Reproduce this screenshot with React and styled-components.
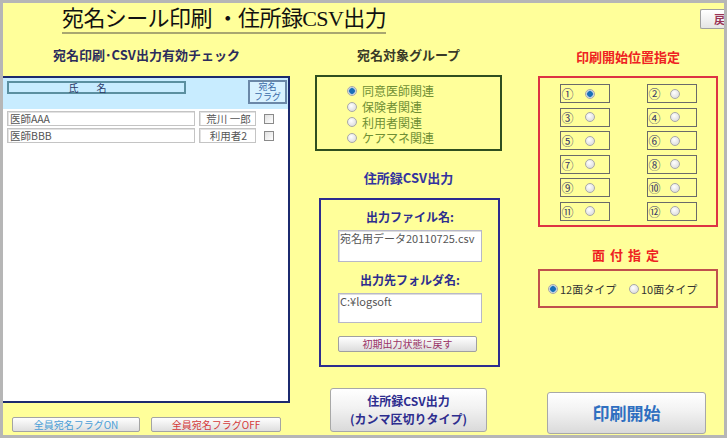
import React from 'react'
import styled, { createGlobalStyle } from 'styled-components'

const GlobalStyle = createGlobalStyle`
  body {
    margin: 0;
    background: #ffffff;
  }
`

const JP = `'Noto Sans CJK JP', 'Liberation Sans', sans-serif`

const Frame = styled.div`
  width: 727px;
  height: 438px;
  box-sizing: border-box;
  border: 3px solid #b6b6b6;
  background: #ffff9a;
  overflow: hidden;
  display: flex;
  flex-direction: column;
  font-family: ${JP};
`

const Header = styled.div`
  display: flex;
  align-items: flex-start;
  height: 40px;
  flex-shrink: 0;
`

const Title = styled.div`
  margin: 4px 0 0 59px;
  font-family: 'Liberation Serif', 'Noto Sans CJK JP', serif;
  font-size: 22px;
  line-height: 24px;
  letter-spacing: -0.6px;
  color: #111;
  border-bottom: 2px solid #a9a770;
  padding-bottom: 1px;
`

const BackButton = styled.div`
  margin: 6px 0 0 auto;
  width: 24px;
  height: 20px;
  box-sizing: border-box;
  border: 1px solid #a0a0a0;
  border-right: none;
  border-radius: 2px 0 0 2px;
  background: linear-gradient(#ffffff, #e4e4e4);
  color: #993355;
  font-size: 11px;
  font-weight: bold;
  line-height: 18px;
  padding-left: 13px;
`

const Columns = styled.div`
  display: flex;
  flex: 1;
`

const Column = styled.div`
  display: flex;
  flex-direction: column;
  width: ${p => p.$width}px;
  margin-left: ${p => p.$left || 0}px;
  padding-top: ${p => p.$top || 0}px;
`

const SectionTitle = styled.div`
  font-size: 13px;
  font-weight: bold;
  line-height: 24px;
  height: 24px;
  text-align: center;
  color: ${p => p.$color};
  letter-spacing: ${p => p.$spacing || 0}px;
  margin-top: ${p => p.$mt || 0}px;
`

/* left list */
const ListPanel = styled.div`
  margin-top: 9px;
  height: 327px;
  box-sizing: border-box;
  border: 2px solid #1c2a6e;
  border-left: none;
  background: #ffffff;
`

const ListHead = styled.div`
  height: 31px;
  background: #c8ecff;
  display: flex;
  align-items: flex-start;
  padding-left: 4px;
`

const NameBar = styled.div`
  margin-top: 3px;
  width: 179px;
  height: 13px;
  box-sizing: border-box;
  border: 2px solid #5b8fa0;
  font-size: 10px;
  line-height: 9px;
  text-align: center;
  color: #2a3a6a;
  letter-spacing: 18px;
`

const FlagBox = styled.div`
  margin: 2px 1px 0 auto;
  width: 39px;
  height: 24px;
  box-sizing: border-box;
  border: 2px solid #6a88a8;
  background: #d8f2ff;
  color: #3a6aa8;
  text-align: center;
  font-size: 9px;
  line-height: 10px;
  padding: 0 4px;
  word-break: keep-all;
`

const Rows = styled.div`
  display: flex;
  flex-direction: column;
  gap: 2px;
  padding: 2px 0 0 4px;
`

const Row = styled.div`
  display: flex;
  align-items: center;
  height: 15px;
`

const Field = styled.div`
  width: ${p => p.$width}px;
  height: 15px;
  margin-left: ${p => p.$left || 0}px;
  box-sizing: border-box;
  border: 1px solid #c4c4c4;
  box-shadow: inset 1px 1px 0 #e2e2e2;
  font-size: 10.5px;
  line-height: 13px;
  color: #555;
  padding-left: 2px;
  text-align: ${p => (p.$center ? 'center' : 'left')};
  white-space: nowrap;
`

const Check = styled.div`
  margin-left: 8px;
  width: 10px;
  height: 10px;
  box-sizing: border-box;
  border: 1px solid #8a8a8a;
  background: linear-gradient(135deg, #e0e0e0, #ffffff);
`

const SmallButtons = styled.div`
  display: flex;
  gap: 11px;
  margin: 14px 0 0 9px;
`

const SmallButton = styled.div`
  width: ${p => p.$width}px;
  height: 15px;
  box-sizing: border-box;
  border: 1px solid #a4a4a4;
  border-radius: 2px;
  background: linear-gradient(#ffffff, #dedede);
  color: ${p => p.$color};
  font-size: 10px;
  line-height: 13px;
  text-align: center;
`

/* middle */
const GroupBox = styled.div`
  margin-top: 8px;
  height: 76px;
  box-sizing: border-box;
  border: 2px solid #2f4f1f;
  padding: 6px 0 0 30px;
`

const RadioLine = styled.div`
  display: flex;
  align-items: center;
  height: 15.7px;
  gap: 5px;
  font-size: 12px;
  color: ${p => p.$color || '#333'};
`

const Radio = styled.span`
  flex-shrink: 0;
  width: 10px;
  height: 10px;
  box-sizing: border-box;
  border-radius: 50%;
  border: 1px solid #a8a8a8;
  background: ${p =>
    p.$checked
      ? 'radial-gradient(circle, #1a6fb8 0 2.5px, #8fb8d8 3px, #e8e8e8 4px)'
      : 'radial-gradient(circle at 40% 35%, #ffffff, #d4d4d4)'};
  margin-left: ${p => p.$left || 0}px;
`

const CsvBox = styled.div`
  margin: 8px 2px 0 4px;
  height: 169px;
  box-sizing: border-box;
  border: 2px solid #2d2d8f;
  padding: 9px 0 0 17px;
  display: flex;
  flex-direction: column;
`

const FieldLabel = styled.div`
  width: 144px;
  text-align: center;
  font-size: 12px;
  font-weight: bold;
  line-height: 16px;
  color: #2d2d8f;
  margin-top: ${p => p.$mt || 0}px;
`

const TextArea = styled.div`
  margin-top: 5px;
  width: 144px;
  height: ${p => p.$height}px;
  box-sizing: border-box;
  border: 1px solid #b8b8c8;
  box-shadow: inset 1px 1px 0 #dcdcdc;
  background: #ffffff;
  font-size: 11px;
  line-height: 14px;
  color: #555;
  padding-left: 1px;
  white-space: nowrap;
  overflow: hidden;
`

const ResetButton = styled.div`
  margin-top: 13px;
  width: 139px;
  height: 16px;
  box-sizing: border-box;
  border: 1px solid #a0a0a0;
  border-radius: 2px;
  background: linear-gradient(#ffffff, #dcdcdc);
  color: #993366;
  font-size: 10px;
  line-height: 14px;
  text-align: center;
`

const BigButton = styled.div`
  margin: ${p => p.$mt}px 0 0 ${p => p.$left}px;
  width: ${p => p.$width}px;
  height: ${p => p.$height}px;
  box-sizing: border-box;
  border: 1px solid #a8a8a8;
  border-radius: 3px;
  background: linear-gradient(#ffffff 0%, #f2f2f2 45%, #dadada 100%);
  display: flex;
  flex-direction: column;
  align-items: center;
  justify-content: center;
  color: ${p => p.$color};
  font-weight: bold;
  font-size: ${p => p.$size}px;
  line-height: ${p => p.$line}px;
`

/* right */
const PosBox = styled.div`
  margin-top: 7px;
  height: 151px;
  box-sizing: border-box;
  border: 2px solid #dd3344;
  display: grid;
  grid-template-columns: 50px 50px;
  grid-auto-rows: 19px;
  column-gap: 37px;
  row-gap: 4.6px;
  justify-content: center;
  padding-top: 6px;
`

const PosCell = styled.div`
  box-sizing: border-box;
  border: 1px solid #6a6a6a;
  display: flex;
  align-items: center;
  font-size: 12px;
  color: #3a3a6a;
  padding-left: 1px;
`

const TypeBox = styled.div`
  margin-top: 2px;
  height: 39px;
  box-sizing: border-box;
  border: 2px solid #c0504d;
  display: flex;
  align-items: center;
  padding-left: 8px;
`

const TypeOption = styled.div`
  display: flex;
  align-items: center;
  gap: 2px;
  font-size: 11px;
  color: #333;
  width: ${p => p.$width}px;
`

const groups = ['同意医師関連', '保険者関連', '利用者関連', 'ケアマネ関連']
const positions = ['①', '②', '③', '④', '⑤', '⑥', '⑦', '⑧', '⑨', '⑩', '⑪', '⑫']
const people = [
  { title: '医師AAA', name: '荒川 一郎' },
  { title: '医師BBB', name: '利用者2' },
]

export default function App() {
  return (
    <>
      <GlobalStyle />
      <Frame>
        <Header>
          <Title>宛名シール印刷 ・住所録CSV出力</Title>
          <BackButton>戻</BackButton>
        </Header>
        <Columns>
          <Column $width={287}>
            <SectionTitle $color="#2c2c5c">宛名印刷･CSV出力有効チェック</SectionTitle>
            <ListPanel>
              <ListHead>
                <NameBar>氏名</NameBar>
                <FlagBox>{'宛名\u200bフラグ'}</FlagBox>
              </ListHead>
              <Rows>
                {people.map(p => (
                  <Row key={p.title}>
                    <Field $width={188}>{p.title}</Field>
                    <Field $width={57} $left={4} $center>{p.name}</Field>
                    <Check />
                  </Row>
                ))}
              </Rows>
            </ListPanel>
            <SmallButtons>
              <SmallButton $width={128} $color="#4a9ed6">全員宛名フラグON</SmallButton>
              <SmallButton $width={130} $color="#d43a3a">全員宛名フラグOFF</SmallButton>
            </SmallButtons>
          </Column>

          <Column $width={187} $left={25}>
            <SectionTitle $color="#3a3a28">宛名対象グループ</SectionTitle>
            <GroupBox>
              {groups.map((g, i) => (
                <RadioLine key={g} $color="#6f8f35">
                  <Radio $checked={i === 0} />
                  {g}
                </RadioLine>
              ))}
            </GroupBox>
            <SectionTitle $color="#3333a0" $mt={15}>住所録CSV出力</SectionTitle>
            <CsvBox>
              <FieldLabel>出力ファイル名:</FieldLabel>
              <TextArea $height={32}>宛名用データ20110725.csv</TextArea>
              <FieldLabel $mt={10}>出力先フォルダ名:</FieldLabel>
              <TextArea $height={30}>C:¥logsoft</TextArea>
              <ResetButton>初期出力状態に戻す</ResetButton>
            </CsvBox>
            <BigButton $mt={21} $left={15} $width={157} $height={44} $color="#2d2d8f" $size={12} $line={18}>
              <span>住所録CSV出力</span>
              <span>(カンマ区切りタイプ)</span>
            </BigButton>
          </Column>

          <Column $width={180} $left={36} $top={2}>
            <SectionTitle $color="#ee2222">印刷開始位置指定</SectionTitle>
            <PosBox>
              {positions.map((n, i) => (
                <PosCell key={n}>
                  {n}
                  <Radio $checked={i === 0} $left={i % 2 ? 9 : 11} />
                </PosCell>
              ))}
            </PosBox>
            <SectionTitle $color="#ee2222" $spacing={5} $mt={16}>面付指定</SectionTitle>
            <TypeBox>
              <TypeOption $width={81}>
                <Radio $checked />
                12面タイプ
              </TypeOption>
              <TypeOption>
                <Radio />
                10面タイプ
              </TypeOption>
            </TypeBox>
            <BigButton $mt={84} $left={9} $width={159} $height={42} $color="#2f6fc0" $size={17} $line={20}>
              印刷開始
            </BigButton>
          </Column>
        </Columns>
      </Frame>
    </>
  )
}
